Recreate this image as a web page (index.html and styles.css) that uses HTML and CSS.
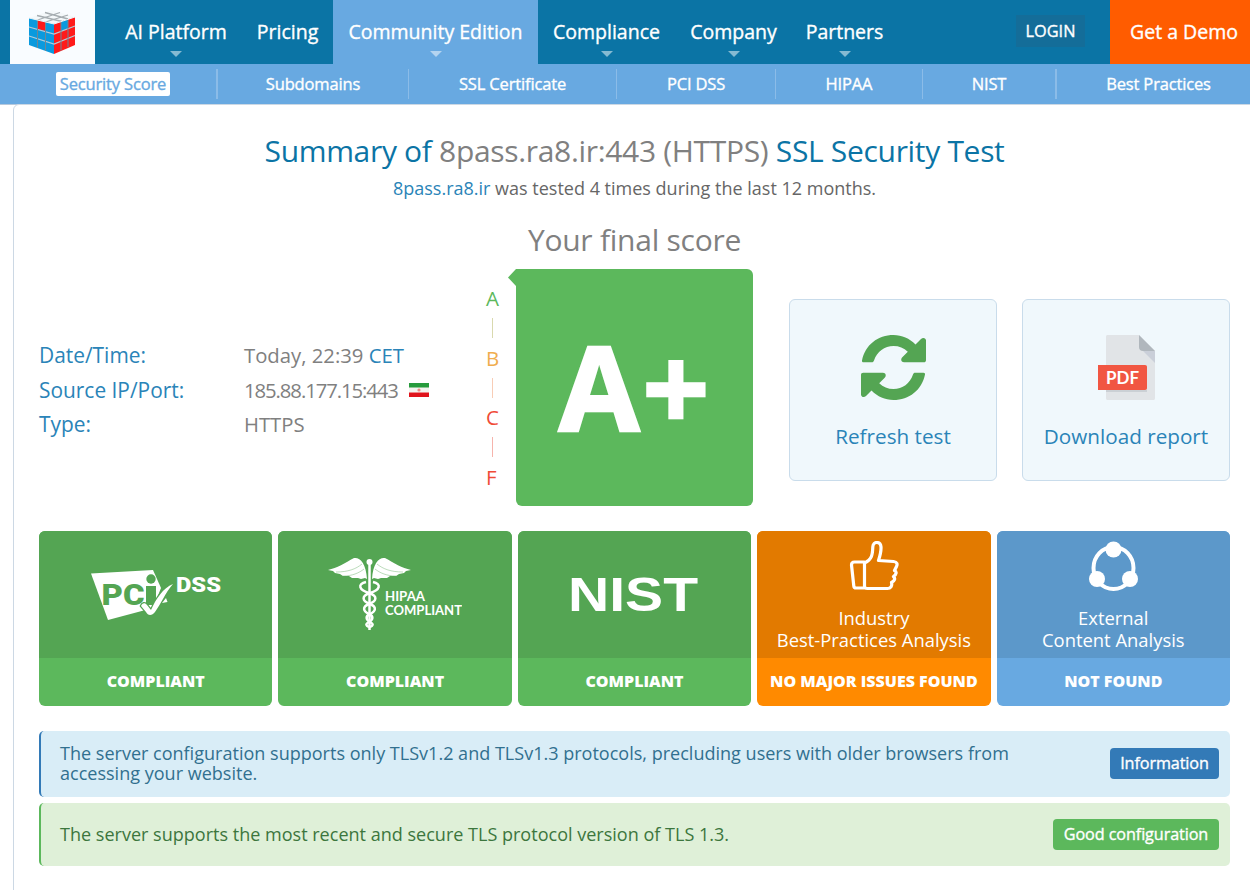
FILE: index.html
```html
<!DOCTYPE html>
<html lang="en">
<head>
<meta charset="utf-8">
<title>SSL Security Test</title>
<link rel="stylesheet" href="styles.css">
</head>
<body>
<header class="topbar">
  <a class="logo"><svg width="48" height="46" viewBox="0 0 48 46">
    <path fill="#f4f8fa" d="M1 9 24 1l23 7-21 7z"/>
    <path fill="#0a9ade" d="M1 9l25 6v30L1 36z"/>
    <path fill="#ff1a1a" d="M26 15l21-7v28L26 45z"/>
    <path fill="#ff1a1a" d="M9.500 11l8 2v9l-8-2z"/>
    <path fill="#0a9ade" d="M33 12.600l7-2.300v9l-7 3z"/>
    <path fill="none" stroke="#a5acb0" stroke-width="1.300" d="M9 6.500l25 6M17 3.500l23 6.500M9.500 11 32 3.500M17.500 13 40 6"/>
    <path fill="none" stroke="#b5cbd8" stroke-width="1.200" d="M1 18l25 7 21-8M1 27l25 8 21-8.500"/>
    <path fill="none" stroke="#6f8796" stroke-width="1" d="M9.500 11v28M17.500 13v29M33 12.500v29M40 10v28"/>
    <path fill="none" stroke="#eaf2f6" d="M1 9l25 6 21-7"/>
  </svg></a>
  <nav class="menu">
    <a class="item w-ai"><span>AI Platform</span><i class="caret"></i></a>
    <a class="item w-pr"><span>Pricing</span></a>
    <a class="item w-ce active"><span>Community Edition</span><i class="caret"></i></a>
    <a class="item w-cl"><span>Compliance</span><i class="caret"></i></a>
    <a class="item w-co"><span>Company</span><i class="caret"></i></a>
    <a class="item w-pa"><span>Partners</span><i class="caret"></i></a>
  </nav>
  <a class="login">LOGIN</a>
  <a class="demo">Get a Demo</a>
</header>
<nav class="subnav">
  <a class="s1"><span class="current">Security Score</span></a>
  <a class="s2">Subdomains</a>
  <a class="s3">SSL Certificate</a>
  <a class="s4">PCI DSS</a>
  <a class="s5">HIPAA</a>
  <a class="s6">NIST</a>
  <a class="s7">Best Practices</a>
</nav>
<main class="panel">
  <h1 class="title">Summary of <span class="grey">8pass.ra8.ir:443 (HTTPS)</span> SSL Security Test</h1>
  <p class="tested"><a>8pass.ra8.ir</a> was tested 4 times during the last 12 months.</p>
  <h2 class="final">Your final score</h2>
  <section class="score">
    <dl class="facts">
      <dt>Date/Time:</dt><dd><span class="f1">Today, 22:39 <a>CET</a></span></dd>
      <dt>Source IP/Port:</dt><dd><span class="f2">185.88.177.15:443</span><svg class="flag" width="20" height="14" viewBox="0 0 20 14"><path fill="#279b3d" d="M0 0h20v5H0z"/><path fill="#f4f4f0" d="M0 4.500h20v5H0z"/><path fill="#e0141c" d="M0 9.500h20V14H0z"/><circle cx="10" cy="7" r="1.600" fill="#ee8a84"/></svg></dd>
      <dt>Type:</dt><dd><span class="f3">HTTPS</span></dd>
    </dl>
    <div class="grades">
      <b class="ga">A</b><i class="la"></i><b class="gb">B</b><i class="lb"></i><b class="gc">C</b><i class="lc"></i><b class="gf">F</b>
    </div>
    <div class="grade">A+<svg class="pointer" width="15" height="17" viewBox="0 0 15 17"><path fill="#5cb85c" d="M15 0H8L0 8.500 8 17h7z"/></svg></div>
    <a class="action refresh"><svg width="66" height="66" viewBox="-1 0 66 66" fill="#54a553">
      <path d="M1 25.500C4 10 17 0 32.500 0c8.500 0 16 3.500 22 9.500l5.500-5.500c2-2 5-1 5 1.500V25c0 1.500-.8 2.300-2.300 2.300H43c-2.700 0-3.700-3-1.700-5l5.500-5.500C43 13 38 11 32.500 11 23.500 11 16 16.500 13 25.500c-.4 1.200-1 1.800-2.200 1.800H2.500C1.400 27.300.8 26.600 1 25.500z"/>
      <path d="M64 39.500C61 55 48 65 32.500 65c-8.500 0-16-3.500-22-9.500L5 61c-2 2-5 1-5-1.500V40c0-1.500.8-2.300 2.300-2.300H22c2.700 0 3.700 3 1.700 5l-5.500 5.500C22 52 27 54 32.500 54c9 0 16.500-5.500 19.500-14.500.4-1.200 1-1.800 2.200-1.800h8.300c1.100 0 1.700.7 1.500 1.800z"/>
    </svg><span>Refresh test</span></a>
    <a class="action download"><svg width="66" height="66" viewBox="-5 0 66 66">
      <path fill="#e1e4e7" d="M10 0h31l16 16v47c0 1.500-.5 2-2 2H10c-1.500 0-2-.5-2-2V2c0-1.500.5-2 2-2z"/>
      <path fill="#cacfd9" d="M45 16h12v12z"/><path fill="#b0b7bd" d="M41 0l16 16H45c-2.500 0-4-1.500-4-4z"/>
      <path fill="#cbd0d5" d="M8 55h41v2H8z"/><path fill="#f15642" d="M0 30h47c1.300 0 2 .7 2 2v21c0 1.300-.7 2-2 2H0z"/>
      <text class="pdf" x="8" y="48.700" textLength="33" lengthAdjust="spacingAndGlyphs">PDF</text>
    </svg><span>Download report</span></a>
  </section>
  <section class="cards">
    <article class="card green"><div class="face"><svg width="130" height="50" viewBox="0 0 130 50">
      <path fill="#fff" d="M0 3.500 62 0l8 18-8 20-45 12z"/>
      <text class="pci" x="10.500" y="35" textLength="43" lengthAdjust="spacingAndGlyphs">PC</text>
      <circle class="ink" cx="60" cy="9" r="4.700"/><path class="ink" d="M55 16h10v19H55z"/>
      <path class="tick" d="M50 36c1-3 4-4 6-1l4 5C65 29 72 18 82 14c-8 9-12 20-18 28-3 4-7 4-9 0z"/>
      <path fill="#fff" d="M71 33l4-5 1.500 4z"/>
      <text class="dss" x="85" y="22" textLength="45" lengthAdjust="spacingAndGlyphs">DSS</text>
    </svg></div><div class="status">COMPLIANT</div></article>
    <article class="card green"><div class="face"><svg width="134" height="75" viewBox="0 0 134 75">
      <path fill="#fff" d="M39 22C38 6 32 0 26 1 17 6 9 11 0 13l5 1 2 2 5 1 3 2 6 0 3 2 6 0 3 1 4-1zM44 22C45 6 51 0 57 1c9 5 17 10 26 12l-5 1-2 2-5 1-3 2-6 0-3 2-6 0-3 1-4-1z"/>
      <path fill="none" stroke="#54a553" stroke-width=".4" d="M8 15c12 0 20-3 26-8M15 19c9 0 16-3 21-7M75 15c-12 0-20-3-26-8M68 19c-9 0-16-3-21-7"/>
      <circle cx="41.500" cy="5" r="3" fill="#fff"/>
      <g fill="none" stroke="#fff" stroke-width="2.500"><path d="M41.500 6v67"/>
      <path d="M38 25c-9 2-7 8 3 11 9 3 8 8 0 11-7 3-6 7 0 10 5 2 4 6 0 8s-3 4 0 5"/>
      <path d="M45 25c9 2 7 8-3 11-9 3-8 8 0 11 7 3 6 7 0 10-5 2-4 6 0 8s3 4 0 5"/></g>
      <text class="hip" x="57" y="43.500" textLength="40" lengthAdjust="spacingAndGlyphs">HIPAA</text>
      <text class="hip" x="57" y="58" textLength="77" lengthAdjust="spacingAndGlyphs">COMPLIANT</text>
    </svg></div><div class="status">COMPLIANT</div></article>
    <article class="card green"><div class="face"><svg width="134" height="50" viewBox="-4 -8 134 50">
      <text class="nist" x="-3" y="33" textLength="130" lengthAdjust="spacingAndGlyphs">NIST</text>
    </svg></div><div class="status">COMPLIANT</div></article>
    <article class="card orange"><div class="face tall"><svg width="50" height="50" viewBox="-.500 0 50 50" fill="none" stroke="#fff" stroke-width="3.200" stroke-linejoin="round" stroke-linecap="round">
      <path d="M15 21v26H6.500Q4.500 47 4.300 45L2 24q0-3 3-3h10M15 22C23 18 23 13 23.300 6c.2-6 7.700-6 8.200 0 .3 5-1 9-2.500 13.500L44 20.500c4 .5 4 3 3 5l-2 4c2.500 1 2 4-1 6 2 2 1.500 4-2 6 1 3.500-1 6-4 6H18q-3 0-3-2"/>
    </svg><p class="cap c4">Industry<br>Best-Practices Analysis</p></div><div class="status st4">NO MAJOR ISSUES FOUND</div></article>
    <article class="card blue"><div class="face tall"><svg width="50" height="50" viewBox="-.500 0 50 50" fill="#fff">
      <ellipse cx="25" cy="27" rx="20" ry="21" fill="none" stroke="#fff" stroke-width="4"/>
      <circle cx="25" cy="8.500" r="8"/><circle cx="8.500" cy="38" r="8"/><circle cx="41.500" cy="38" r="8"/>
    </svg><p class="cap c5">External<br>Content Analysis</p></div><div class="status st5">NOT FOUND</div></article>
  </section>
  <div class="alert info"><p class="a1">The server configuration supports only TLSv1.2 and TLSv1.3 protocols, precluding users with older browsers from<br>accessing your website.</p><span class="tag t1">Information</span></div>
  <div class="alert good"><p class="a2">The server supports the most recent and secure TLS protocol version of TLS 1.3.</p><span class="tag t2">Good configuration</span></div>
</main>
</body>
</html>
```
FILE: styles.css
```css
* { box-sizing: border-box; }
body { margin: 0; width: 1250px; height: 890px; overflow: hidden; background: #fff; font-family: "Open Sans", "Noto Sans", sans-serif; white-space: nowrap; }
h1, h2, p, dl, dd { margin: 0; font-weight: 400; }
svg { display: block; }

.topbar { display: flex; height: 64px; padding-left: 10px; background: #0b74a5; color: #fff; }
.logo { width: 85px; padding: 9px 0 0 18px; background: #f9fcff; }
.menu { display: flex; padding-left: 15px; }
.item { display: flex; flex-direction: column; align-items: center; padding-top: 18px; font-size: 19.500px; line-height: 28px; }
.item, .login, .demo, .subnav, .tag { font-weight: 500; -webkit-text-stroke: .35px; }
.active { background: #68a9e1; }
.w-ai { width: 132px; }
.w-pr { width: 91px; }
.w-ce { width: 205px; }
.w-cl { width: 137px; }
.w-co { width: 117px; }
.w-pa { width: 105px; }
.caret { margin-top: 5px; border: 6px solid transparent; border-top-color: rgba(255,255,255,.5); border-bottom: 0; }
.login { width: 69px; height: 32px; margin: 15px 25px 0 119px; background: #146d99; font-size: 16.300px; line-height: 32px; text-align: center; }
.demo { width: 140px; padding-left: 20px; background: #ff5c00; font-size: 19.500px; line-height: 64px; }

.subnav { display: flex; height: 41px; padding: 5px 0 6px 10px; border-bottom: 1px solid #b5c8dc; background: #68a9e1; color: #fff; font-size: 16.500px; line-height: 30px; letter-spacing: -.150px; text-align: center; }
.subnav a { flex: none; border-right: 1px solid #8bbce8; height: 30px; }
.subnav .s1 { width: 208px; border-right-width: 2px; }
.s2 { width: 191px; }
.s3 { width: 208px; }
.s4 { width: 159px; }
.s5 { width: 147px; }
.subnav .s6 { width: 134px; border-right-width: 2px; }
.subnav .s7 { width: 203px; border-right: 0; }
.current { display: inline-block; width: 114px; height: 24px; margin-top: 3px; border-radius: 2px; background: #fff; color: #68a9e1; line-height: 24px; }

.panel { width: 1243px; height: 800px; margin: -1px 0 0 13px; padding: 24px 25px 0; border: 1px solid #ccd8e4; border-radius: 6px; background: #fff; }
.title { height: 46px; color: #0b74a5; font-size: 30px; line-height: 44px; letter-spacing: -.320px; text-align: center; }
.grey { color: #808080; }
.tested { height: 26px; padding-top: 1px; color: #666; font-size: 18px; line-height: 24px; text-align: center; }
.tested a, .facts a { color: #2a84b8; }
.final { height: 68px; padding-top: 18px; color: #808080; font-size: 30px; line-height: 42px; letter-spacing: -.250px; text-align: center; }
.score { display: flex; height: 237px; }
.facts { display: grid; grid-template-columns: 205px 242px; grid-auto-rows: 34.500px; align-content: start; padding-top: 69px; color: #808080; font-size: 20.300px; line-height: 34px; }
.facts dt { color: #2a84b8; font-size: 20.900px; }
.facts dd { display: flex; align-items: center; gap: 12px; }
.f2 { letter-spacing: -1.070px; width: 153px; }
.grades { display: flex; flex-direction: column; width: 30px; padding-top: 18px; font-size: 20.500px; line-height: 22px; }
.grades b { height: 22px; font-weight: 400; }
.grades i { width: 1px; height: 20px; margin: 9px 0 8.600px 6px; }
.ga { color: #5cb85c; }
.gb { color: #f0ad4e; }
.gc, .gf { color: #f04b37; }
.la { background: #d9d9ae; }
.lb { background: #f8cdb6; }
.lc { background: #f6b4ac; }
.grade { position: relative; width: 237px; border-radius: 6px; background: #5cb85c; color: #fff; font-size: 117px; line-height: 233px; font-weight: 700; letter-spacing: 3px; padding-left: 2px; -webkit-text-stroke: 2.500px #fff; text-align: center; }
.pointer { position: absolute; left: -8px; top: 0; }
.action { display: flex; flex-direction: column; align-items: center; width: 208px; height: 182px; margin: 30px 0 0 36px; padding-top: 35px; border: 1px solid #c9dceb; border-radius: 6px; background: #f0f8fc; color: #2a84b8; font-size: 20.700px; line-height: 30px; }
.download { margin-left: 25px; }
.action span { margin-top: 20px; }
.pdf { fill: #fff; font: 700 16.500px Lato, sans-serif; }

.cards { display: grid; grid-template-columns: repeat(5, 1fr); gap: 6px; width: 1191px; height: 175px; margin-top: 25px; }
.card { display: grid; grid-template-rows: 127px 48px; overflow: hidden; border-radius: 6px; color: #fff; }
.face { display: flex; flex-direction: column; align-items: center; justify-content: center; }
.tall { justify-content: flex-start; padding-top: 10px; }
.cap { margin-top: 16px; font-size: 18.400px; line-height: 22px; font-weight: 500; text-align: center; }
.status { font-size: 16px; line-height: 46px; font-weight: 800; text-align: center; }
.green { background: #5cb85c; }
.green .face { background: #54a553; }
.orange { background: #ff8a00; }
.orange .face { background: #e27a00; }
.blue { background: #68a9e1; }
.blue .face { background: #5c98ca; }
.pci { fill: #54a553; font: 900 29px Roboto, sans-serif; }
.ink { fill: #54a553; }
.tick { fill: #fff; stroke: #54a553; stroke-width: 2.500px; paint-order: stroke; }
.dss { fill: #fff; font: 900 21px Roboto, sans-serif; }
.hip { fill: #fff; font: 700 14px Lato, sans-serif; }
.nist { fill: #fff; font: 700 48px "Liberation Sans", sans-serif; }

.alert { display: flex; align-items: center; justify-content: space-between; width: 1191px; padding: 0 11px 0 19px; border-left: 2px solid; border-radius: 5px; font-size: 18.050px; line-height: 20px; }
.alert p { margin-top: -3px; }
.alert .a2 { margin-top: -1px; }
.info { height: 66px; margin-top: 25px; border-color: #337ab7; background: #d9edf7; color: #31708f; }
.good { height: 63px; margin-top: 6px; border-color: #5cb85c; background: #dff0d8; color: #3c763d; }
.tag { height: 31px; margin-top: -1px; border-radius: 4px; color: #fff; font-size: 16.200px; line-height: 31px; letter-spacing: -.100px; text-align: center; }
.t1 { width: 109px; background: #337ab7; }
.t2 { width: 166px; background: #5cb85c; }
```
